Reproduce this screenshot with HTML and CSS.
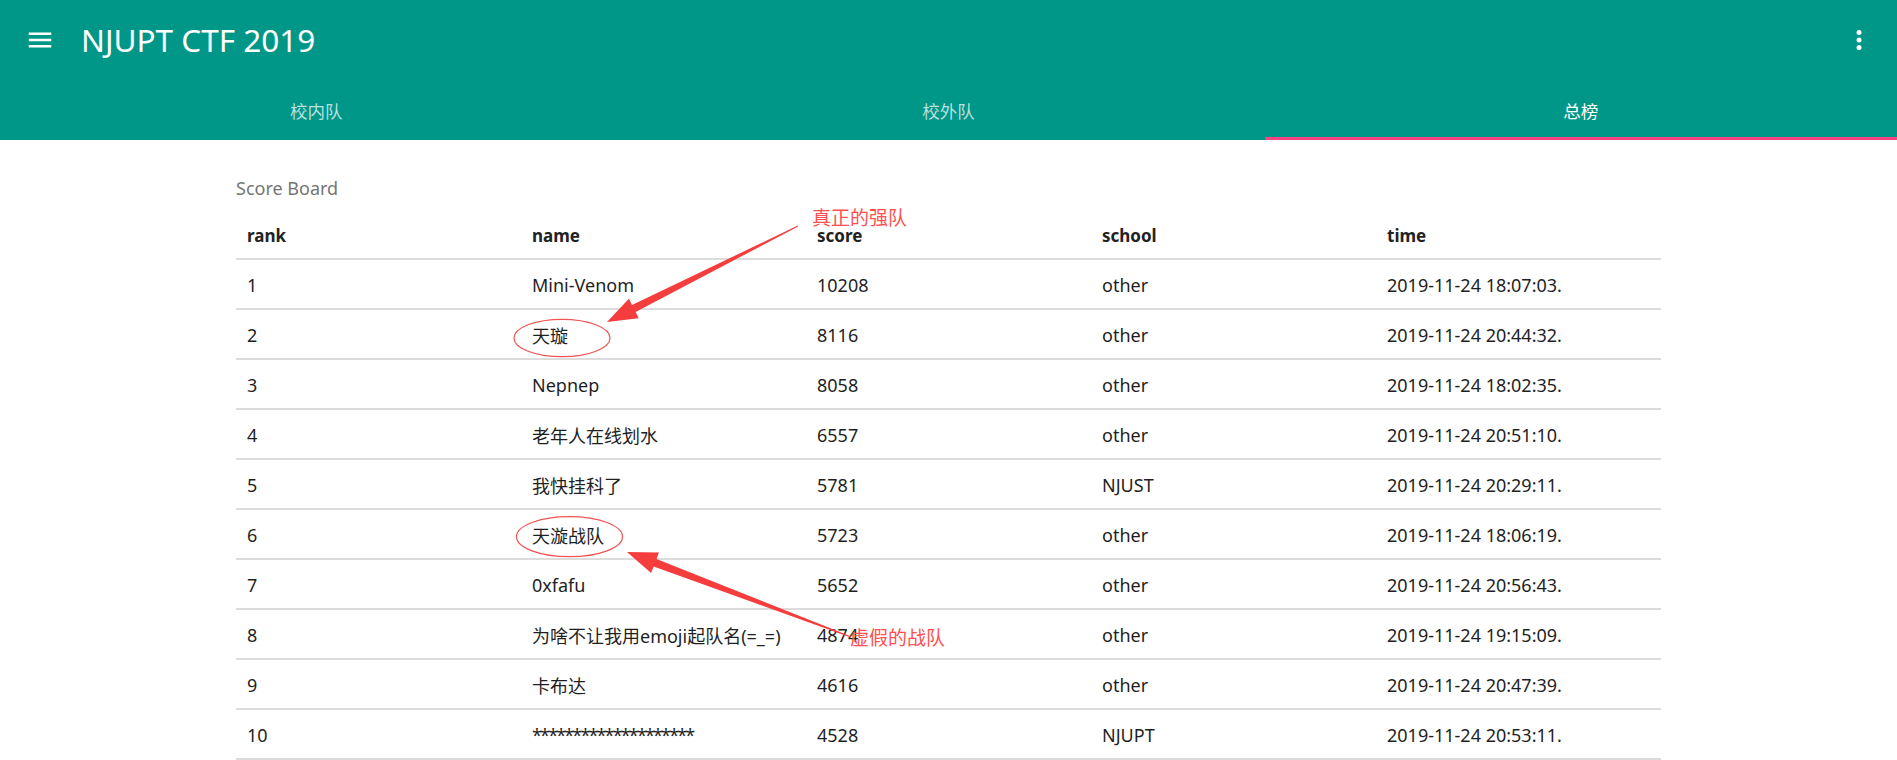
FILE: index.html
```html
<!DOCTYPE html>
<html lang="zh-CN">
<head>
<meta charset="utf-8">
<title>NJUPT CTF 2019</title>
<link rel="stylesheet" href="styles.css">
</head>
<body>
<header class="app-bar">
  <div class="toolbar">
    <button class="icon-btn" aria-label="menu">
      <svg viewBox="0 0 24 24" width="30" height="30"><path fill="#fff" d="M3 18h18v-2H3v2zm0-5h18v-2H3v2zm0-7v2h18V6H3z"/></svg>
    </button>
    <div class="title">NJUPT CTF 2019</div>
    <div class="spacer"></div>
    <button class="icon-btn" aria-label="more">
      <svg viewBox="0 0 24 24" width="30" height="30"><circle cx="12" cy="6" r="2" fill="#fff"/><circle cx="12" cy="12" r="2" fill="#fff"/><circle cx="12" cy="18" r="2" fill="#fff"/></svg>
    </button>
  </div>
  <nav class="tabs">
    <div class="tab">校内队</div>
    <div class="tab">校外队</div>
    <div class="tab active">总榜</div>
  </nav>
</header>

<main class="content">
  <div class="subheader">Score Board</div>
  <div class="board">
    <div class="row head"><div>rank</div><div>name</div><div>score</div><div>school</div><div>time</div></div>
    <div class="row"><div>1</div><div>Mini-Venom</div><div>10208</div><div>other</div><div>2019-11-24 18:07:03.</div></div>
    <div class="row"><div>2</div><div>天璇</div><div>8116</div><div>other</div><div>2019-11-24 20:44:32.</div></div>
    <div class="row"><div>3</div><div>Nepnep</div><div>8058</div><div>other</div><div>2019-11-24 18:02:35.</div></div>
    <div class="row"><div>4</div><div>老年人在线划水</div><div>6557</div><div>other</div><div>2019-11-24 20:51:10.</div></div>
    <div class="row"><div>5</div><div>我快挂科了</div><div>5781</div><div>NJUST</div><div>2019-11-24 20:29:11.</div></div>
    <div class="row"><div>6</div><div>天漩战队</div><div>5723</div><div>other</div><div>2019-11-24 18:06:19.</div></div>
    <div class="row"><div>7</div><div>0xfafu</div><div>5652</div><div>other</div><div>2019-11-24 20:56:43.</div></div>
    <div class="row"><div>8</div><div>为啥不让我用emoji起队名(=_=)</div><div>4874</div><div>other</div><div>2019-11-24 19:15:09.</div></div>
    <div class="row"><div>9</div><div>卡布达</div><div>4616</div><div>other</div><div>2019-11-24 20:47:39.</div></div>
    <div class="row"><div>10</div><div><span class="mask">********************</span></div><div>4528</div><div>NJUPT</div><div>2019-11-24 20:53:11.</div></div>
  </div>
</main>

<svg class="annotations" width="1897" height="760" viewBox="0 0 1897 760">
  <g fill="#f53d3d">
    <polygon points="798.2,226.4 635.6,312.1 638.7,318.3 607,322 628.9,298.7 632.0,304.9 797.8,225.6"/>
    <polygon points="851.2,636.5 656.5,558.9 659.0,552.4 627,552 651.1,572.9 653.6,566.4 850.8,637.5"/>
  </g>
  <g fill="none" stroke="#f05454" stroke-width="1.2">
    <ellipse cx="562" cy="338" rx="48" ry="18.7"/>
    <ellipse cx="569.5" cy="536.7" rx="53" ry="20"/>
  </g>
  <g class="note">
    <text x="812" y="225">真正的强队</text>
    <text x="850" y="645">虚假的战队</text>
  </g>
</svg>
</body>
</html>
```
FILE: styles.css
```css
html, body {
  margin: 0;
  padding: 0;
  background: #fff;
}
body {
  position: relative;
  width: 1897px;
  height: 760px;
  overflow: hidden;
  font-family: "Noto Sans", "Noto Sans CJK SC", sans-serif;
  color: #212121;
}
.app-bar {
  background: #009688;
  color: #fff;
}
.toolbar {
  height: 80px;
  display: flex;
  align-items: center;
  padding: 0 23px 0 25px;
  box-sizing: border-box;
}
.icon-btn {
  width: 30px;
  height: 30px;
  padding: 0;
  margin: 0;
  border: 0;
  background: transparent;
  display: flex;
  align-items: center;
  justify-content: center;
}
.icon-btn svg {
  display: block;
}
.title {
  margin-left: 26px;
  font-size: 31.5px;
  line-height: 40px;
}
.spacer {
  flex: 1;
}
.tabs {
  height: 60px;
  display: grid;
  grid-template-columns: repeat(3, 1fr);
}
.tab {
  position: relative;
  display: flex;
  align-items: center;
  justify-content: center;
  font-family: "Noto Sans CJK SC", "Noto Sans", sans-serif;
  font-size: 17.5px;
  color: rgba(255, 255, 255, 0.72);
}
.tab.active {
  color: #fff;
}
.tab.active::after {
  content: "";
  position: absolute;
  left: 0;
  right: 0;
  bottom: 0;
  height: 3px;
  background: #ff4081;
}
.content {
  width: 1425px;
  margin: 0 auto;
  padding-top: 36px;
}
.subheader {
  font-size: 18px;
  line-height: 24px;
  height: 24px;
  color: #757575;
  margin-bottom: 10px;
}
.board {
  display: flex;
  flex-direction: column;
}
.row {
  display: grid;
  grid-template-columns: repeat(5, 285px);
  height: 50px;
  box-sizing: border-box;
  padding-top: 2px;
  border-bottom: 2px solid #dcdcdc;
  align-items: center;
  font-size: 18px;
  color: #1f1f1f;
}
.row > div {
  padding-left: 11px;
  white-space: nowrap;
}
.row.head {
  font-weight: 700;
  font-size: 17px;
  color: #222;
}
.mask {
  letter-spacing: -1.85px;
}
.annotations {
  position: absolute;
  left: 0;
  top: 0;
  pointer-events: none;
}
.note text {
  font-family: "Noto Sans CJK SC", sans-serif;
  font-size: 19px;
  fill: #ff4f4f;
}
```
